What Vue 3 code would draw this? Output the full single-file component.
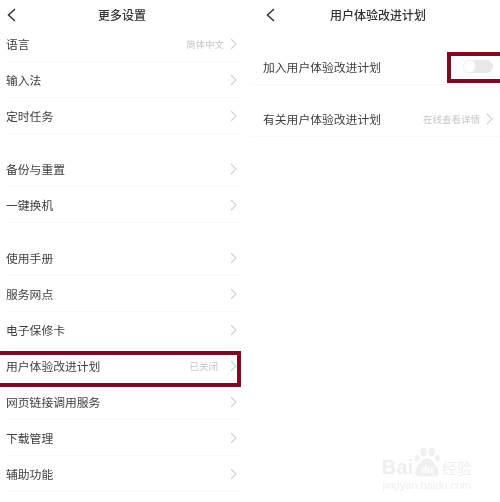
<template>
  <div class="shot">
    <!-- Left: more settings -->
    <section class="panel left">
      <header class="nav">
        <svg class="back" width="11" height="16" viewBox="0 0 11 16" fill="none" stroke="#333" stroke-width="1.5">
          <polyline points="9,2 2.5,8 9,14" />
        </svg>
        <h1 class="title">更多设置</h1>
      </header>
      <div v-for="(group, g) in groups" :key="g" class="group">
        <div v-for="item in group" :key="item.name" class="row" :class="{ marked: item.marked }">
          <span class="name">{{ item.name }}</span>
          <span v-if="item.value" class="value">{{ item.value }}</span>
          <svg class="chev" width="7" height="12" viewBox="0 0 7 12" fill="none" stroke="#d0d0d0" stroke-width="1.1">
            <polyline points="1,1 6,6 1,11" />
          </svg>
          <i v-if="item.marked" class="mark mark-row"></i>
        </div>
      </div>
    </section>

    <!-- Right: user experience programme -->
    <section class="panel right">
      <header class="nav">
        <svg class="back" width="11" height="16" viewBox="0 0 11 16" fill="none" stroke="#333" stroke-width="1.5">
          <polyline points="9,2 2.5,8 9,14" />
        </svg>
        <h1 class="title">用户体验改进计划</h1>
      </header>
      <div class="detail">
        <div class="drow">
          <span class="name">加入用户体验改进计划</span>
          <span class="switch"><b></b></span>
          <i class="mark mark-switch"></i>
        </div>
        <div class="drow">
          <span class="name">有关用户体验改进计划</span>
          <span class="value">在线查看详情</span>
          <svg class="chev" width="7" height="12" viewBox="0 0 7 12" fill="none" stroke="#d0d0d0" stroke-width="1.1">
            <polyline points="1,1 6,6 1,11" />
          </svg>
        </div>
      </div>
    </section>

    <!-- Watermark -->
    <div class="wm">
      <div class="wm-top">
        <span class="wm-bai">Bai</span>
        <svg width="28" height="30" viewBox="0 0 28 30" fill="#f0f0f0">
          <ellipse cx="4" cy="11" rx="2.6" ry="3.6" />
          <ellipse cx="10.5" cy="5" rx="3.2" ry="4.4" />
          <ellipse cx="18.5" cy="5" rx="3.2" ry="4.4" />
          <ellipse cx="24.5" cy="11" rx="2.6" ry="3.6" />
          <path d="M14 11C9.500 11 2 21 2 26C2 30 8 30 14 29C20 30 26 30 26 26C26 21 18.500 11 14 11Z" />
          <text x="14" y="26" text-anchor="middle" font-size="10" font-weight="700" fill="#fff" font-family="Liberation Sans">du</text>
        </svg>
        <span class="wm-cn">经验</span>
      </div>
      <div class="wm-url">jingyan.baidu.com</div>
    </div>
  </div>
</template>

<script setup>
const groups = [
  [
    { name: '语言', value: '简体中文' },
    { name: '输入法' },
    { name: '定时任务' },
  ],
  [
    { name: '备份与重置' },
    { name: '一键换机' },
  ],
  [
    { name: '使用手册' },
    { name: '服务网点' },
    { name: '电子保修卡' },
    { name: '用户体验改进计划', value: '已关闭', marked: true },
    { name: '网页链接调用服务' },
    { name: '下载管理' },
    { name: '辅助功能' },
  ],
]
</script>

<style>
html, body {
  margin: 0;
  background: #fff;
}
</style>

<style scoped>
.shot {
  position: relative;
  display: flex;
  width: 500px;
  height: 502px;
  overflow: hidden;
  background: #fff;
  font-family: "Noto Sans CJK SC", "Liberation Sans", sans-serif;
  filter: blur(0.45px);
}

.panel {
  width: 250px;
  flex-shrink: 0;
}

/* ── Nav bar ── */
.nav {
  display: flex;
  align-items: center;
  box-sizing: border-box;
}
.left .nav {
  height: 26px;
  padding: 4px 0 0 6px;
}
.right .nav {
  height: 30px;
  padding-left: 15px;
}
.back {
  flex-shrink: 0;
}
.title {
  margin: 0;
  font-size: 12px;
  line-height: 16px;
  font-weight: 500;
  color: #333;
}
.left .title {
  margin-left: 81px;
}
.right .title {
  margin-left: 54px;
}

/* ── Settings list ── */
.group {
  margin-bottom: 17px;
}
.group:nth-of-type(3) {
  margin-bottom: 16px;
}
.row {
  position: relative;
  display: flex;
  align-items: center;
  height: 36px;
  margin: 0 9px 0 6px;
  padding-right: 4px;
  border-bottom: 1px solid #f8f8f8;
  box-sizing: border-box;
}
.name {
  flex: 1;
  font-size: 11.8px;
  line-height: 16px;
  color: #404040;
}
.value {
  margin-right: 6px;
  font-size: 9.5px;
  line-height: 14px;
  color: #c6c6c6;
}
.marked .value {
  margin-right: 12px;
}
.chev {
  flex-shrink: 0;
}

/* ── Detail list ── */
.detail {
  padding-top: 3px;
}
.drow {
  position: relative;
  display: flex;
  align-items: center;
  height: 52px;
  padding: 16px 7px 0 13px;
  box-sizing: border-box;
  border-bottom: 1px solid #f8f8f8;
}
.switch {
  display: block;
  width: 30px;
  height: 13px;
  border-radius: 7px;
  background: #e8e8e8;
}
.switch b {
  display: block;
  width: 13px;
  height: 13px;
  box-sizing: border-box;
  border: 1px solid #f1f1f1;
  border-radius: 50%;
  background: #fff;
}

/* ── Red annotation frames ── */
.mark {
  position: absolute;
  box-sizing: border-box;
  border: 4px solid #7c0a20;
  pointer-events: none;
}
.mark-row {
  left: -10px;
  right: 0;
  top: 3px;
  bottom: -4px;
}
.mark-switch {
  left: 197px;
  width: 60px;
  top: 19px;
  height: 31px;
}

/* ── Watermark ── */
.wm {
  position: absolute;
  right: 28px;
  bottom: 11px;
  color: #eee;
  text-align: center;
}
.wm-top {
  display: flex;
  align-items: flex-end;
}
.wm-bai {
  font-family: "Liberation Sans", sans-serif;
  font-size: 20px;
  line-height: 20px;
  font-weight: 700;
}
.wm-cn {
  font-size: 15px;
  line-height: 18px;
  margin-left: 1px;
}
.wm-url {
  font-family: "Liberation Sans", sans-serif;
  font-size: 11px;
  line-height: 12px;
  margin-top: 2px;
}
</style>
